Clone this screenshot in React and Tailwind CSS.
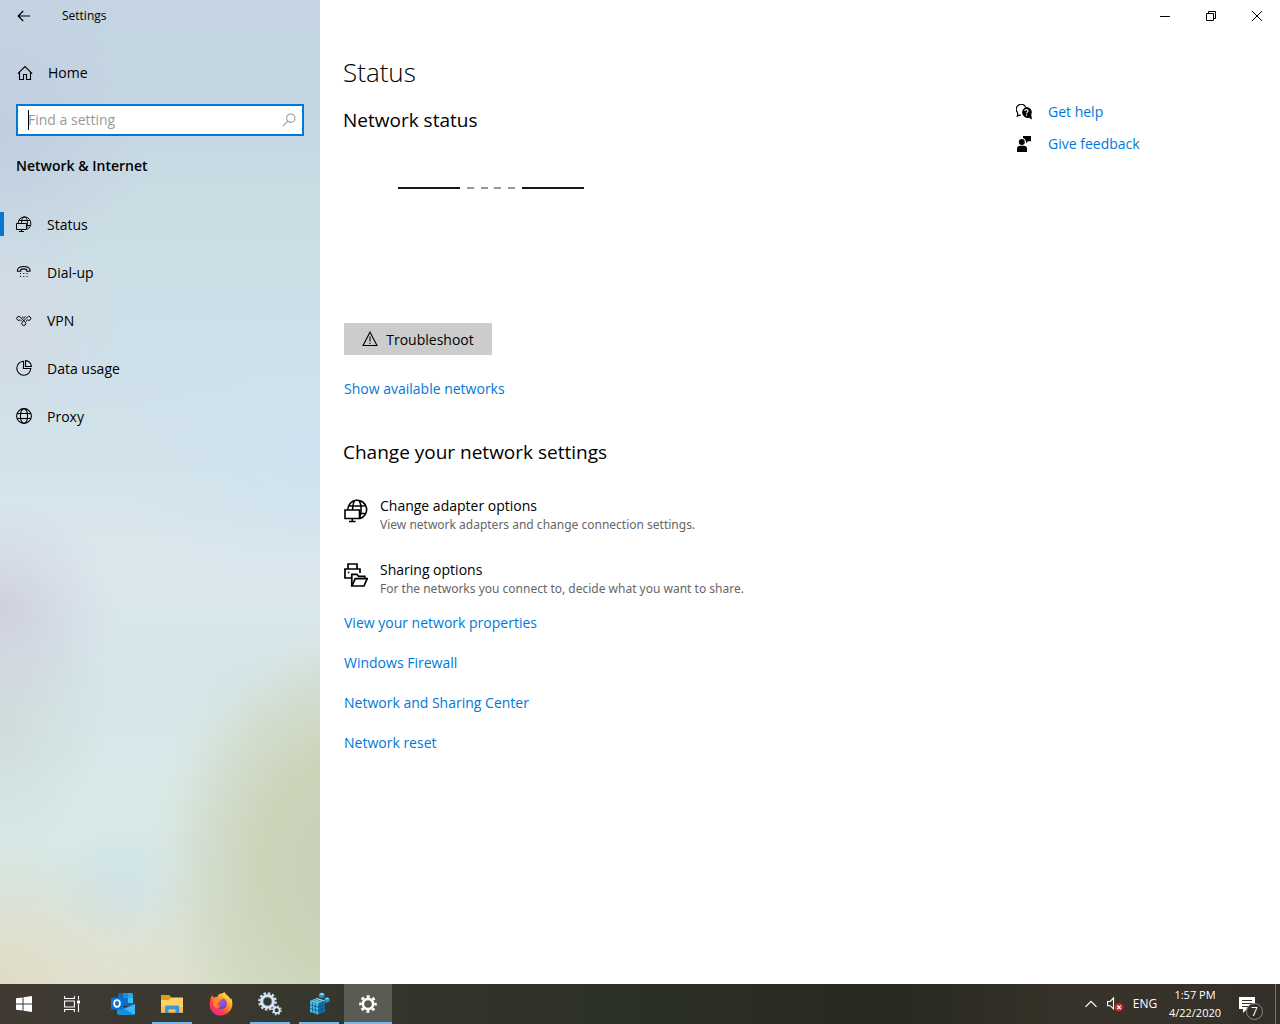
import React from "react";

const line = { fill: "none", stroke: "currentColor" };

function BackIcon() {
  return (
    <svg width="14" height="12" viewBox="0 0 14 12" {...line} strokeWidth="1.2" aria-hidden="true">
      <path d="M13 6H1.2M6.2 1L1.2 6l5 5" />
    </svg>
  );
}

function HomeIcon() {
  return (
    <svg width="16" height="16" viewBox="0 0 16 16" {...line} strokeWidth="1.1" aria-hidden="true">
      <path d="M.8 8.6L8 1.5l7.2 7.1M2.5 7v7.5h4V9.5h3v5h4V7" />
    </svg>
  );
}

function SearchIcon() {
  return (
    <svg width="14" height="14" viewBox="0 0 14 14" {...line} strokeWidth="1.1" aria-hidden="true">
      <circle cx="8.8" cy="5.2" r="4.2" />
      <path d="M5.8 8.2L.8 13.2" />
    </svg>
  );
}

function NetworkIcon() {
  return (
    <svg width="24" height="24" viewBox="0 0 24 24" {...line} strokeWidth="1.6" aria-hidden="true">
      <path d="M3.800 10.800A9.400 9.400 0 1 1 16 19.600M4.800 7h15.800M16 14.500h5.200M8.600 10.800C8.600 5 10.200 1 12.800 1c2.800 0 4.300 4 4.300 9.300 0 3.500-.5 6.500-1.600 8.800" />
      <path d="M1 11h14.500v8.500H1zM8.300 19.500v3M5 22.500h6.600" />
    </svg>
  );
}

function StatusIcon() {
  return (
    <svg width="16" height="16" viewBox="0 0 16 16" {...line} strokeWidth="1" aria-hidden="true">
      <path d="M2.200 7A6.300 6.300 0 1 1 11 13.200M3 4.500h11M11 9.500h3.800M5.500 7.500C5.500 3.500 6.700.7 8.400.7c1.800 0 3 2.800 3 6.300 0 2.200-.3 4-.9 5.500" />
      <path d="M.5 7.500h10v6H.5zM5.500 13.500v2M3 15.500h5" />
    </svg>
  );
}

function DialupIcon() {
  return (
    <svg width="16" height="16" viewBox="0 0 16 16" {...line} strokeWidth="1.1" aria-hidden="true">
      <path d="M1.500 7.300V5.600C3.300 1.500 12.200 1.500 14 5.600v1.700h-3.300V5.600c-1.600-.8-4.200-.8-5.900 0v1.700z" />
      <path d="M4 9.500h8M4 12.500h8" strokeDasharray="1 2.300" />
    </svg>
  );
}

function VpnIcon() {
  return (
    <svg width="16" height="16" viewBox="0 0 16 16" {...line} strokeWidth="1" aria-hidden="true">
      <path d="M4.100 7.900A2 2 0 1 1 4.300 5.100L9.300 10.200A2 2 0 1 1 6.300 10.200L11.300 5.100A2 2 0 1 1 11.500 7.900L9.800 9.500M4.300 7.700l1.600 1.600M6 4.500l1.700 1.600L9.500 4.500" />
    </svg>
  );
}

function DataIcon() {
  return (
    <svg width="16" height="16" viewBox="0 0 16 16" {...line} strokeWidth="1.1" aria-hidden="true">
      <path d="M7.500 1.200A7 7 0 1 0 14.800 8.500H7.500z" />
      <path d="M9.500.6v5.900h5.900A6 6 0 0 0 9.500.6z" />
    </svg>
  );
}

function GlobeIcon() {
  return (
    <svg width="16" height="16" viewBox="0 0 16 16" {...line} strokeWidth="1.1" aria-hidden="true">
      <circle cx="8" cy="8" r="7.400" />
      <ellipse cx="8" cy="8" rx="3.600" ry="7.400" />
      <path d="M1.300 5.500h13.400M1.300 10.500h13.400" />
    </svg>
  );
}

function HelpIcon() {
  return (
    <svg width="16" height="16" viewBox="0 0 16 16" aria-hidden="true">
      <path d="M1.600 8.700A5 5 0 1 1 9.700 3M1.600 8.700v3.600h-.9l2.700-1.200h1.500" fill="none" stroke="#000" strokeWidth="1.200" />
      <path d="M10.500 3a5.300 5.300 0 0 1 4.700 7.700l.8 4.700-3.200-1.600A5.500 5.500 0 1 1 10.500 3z" fill="#000" />
      <path d="M8.800 7c.1-2 3.300-1.900 3.200 0 0 1.100-1.500 1.200-1.500 2.500M10.500 10.600v1.200" fill="none" stroke="#fff" strokeWidth="1.200" />
    </svg>
  );
}

function FeedbackIcon() {
  return (
    <svg width="16" height="16" viewBox="0 0 16 16" aria-hidden="true">
      <circle cx="5.800" cy="6" r="3" />
      <path d="M7 0h8v5.200h-2.800L10 7.300V5.200A4.500 4.500 0 0 0 7 2zM1 16v-3.500C1 10.500 2.500 9.700 4 9.700h3.800c1.800 0 3.200 1 3.200 2.800V16z" />
    </svg>
  );
}

function WarningIcon() {
  return (
    <svg width="16" height="16" viewBox="0 0 16 16" {...line} strokeWidth="1.100" aria-hidden="true">
      <path d="M8 1.200L15 14.500H1zM8 5.500v5M8 11.800v1.200" />
    </svg>
  );
}

function SharingIcon() {
  return (
    <svg width="24" height="24" viewBox="0 0 24 24" {...line} strokeWidth="1.700" aria-hidden="true">
      <path d="M4 6V1h9v5M7.500 15H1V6h15v4M3.800 9.500h1.600M7.800 23V11.300h5l1.800 2h6.200v2.500" />
      <path d="M8 23l3.200-7.300h12L20 23z" />
    </svg>
  );
}

function StartIcon() {
  return (
    <svg width="16" height="16" viewBox="0 0 16 16" fill="#fff" aria-hidden="true">
      <path d="M0 2.300L6.500 1.400V7.500H0zM7.500 1.200L16 0v7.500H7.500zM0 8.500h6.500v6.100L0 13.700zM7.500 8.500H16V16l-8.500-1.200z" />
    </svg>
  );
}

function TaskViewIcon() {
  return (
    <svg width="16" height="16" viewBox="0 0 16 16" fill="none" stroke="#fff" strokeWidth="1.100" aria-hidden="true">
      <path d="M.6 0v2.500h9.800V0M.6 16v-2.500h9.800V16M.6 5h9.800v6H.6zM14.500 0v3.500M14.500 8v8" />
      <path d="M13 4.500h3v3h-3z" fill="#fff" stroke="none" />
    </svg>
  );
}

function OutlookIcon() {
  return (
    <svg width="24" height="22" viewBox="0 0 24 22" aria-hidden="true">
      <path d="M7 1.500Q7 0 8.500 0h12Q22 0 22 1.500V13H7z" fill="#1066b5" />
      <path d="M12 0h5v5h-5z" fill="#1490df" />
      <path d="M17 0h3.500Q22 0 22 1.500V5h-5z" fill="#28a8ea" />
      <path d="M12 5h5v5h-5z" fill="#0f70c4" />
      <path d="M17 5h5v5h-5z" fill="#36c0f5" />
      <path d="M6 11l8 4 10-4v9q0 2-2 2H8q-2 0-2-2z" fill="#1490df" />
      <path d="M24 11v9q0 1-.8 1.500L13.500 16z" fill="#40b8f5" />
      <rect x="0" y="4.500" width="12" height="12" rx="1" fill="#0874d1" />
      <ellipse cx="6" cy="10.500" rx="2.900" ry="3.300" fill="none" stroke="#fff" strokeWidth="1.700" />
    </svg>
  );
}

function ExplorerIcon() {
  return (
    <svg width="22" height="18" viewBox="0 0 22 18" aria-hidden="true">
      <path d="M0 0h8.500l1.500 2.200H22V6H0z" fill="#e39c13" />
      <path d="M0 5h7.500l2-2H22v14.500H0z" fill="#fdd166" />
      <path d="M0 12h22v5.500H0z" fill="#f9c14c" />
      <path d="M4 18v-6q0-1.500 1.500-1.500h11.200q1.500 0 1.500 1.500v6h-3.700v-3.700h-7V18z" fill="#3b96dd" />
    </svg>
  );
}

function FirefoxIcon() {
  return (
    <svg width="24" height="24" viewBox="0 0 24 24" aria-hidden="true">
      <defs>
        <linearGradient id="flame" x1=".85" y1=".1" x2=".2" y2=".95">
          <stop offset="0" stopColor="#fff04a" />
          <stop offset=".35" stopColor="#ff9c22" />
          <stop offset=".7" stopColor="#ff4040" />
          <stop offset="1" stopColor="#e62a91" />
        </linearGradient>
        <radialGradient id="core" cx=".6" cy=".3" r=".8">
          <stop offset="0" stopColor="#a156ed" />
          <stop offset="1" stopColor="#5041ba" />
        </radialGradient>
      </defs>
      <path d="M2 5.200l1.300-2 1.300 2.300C6 4.800 7 4.800 8 5c1.300-2.600 3-3.700 5-3.500 1.400-.8 2-1 2.500-1.500.6 2.500 5 4 6 7.500l.6-1.500c2 4 1.500 9-.3 11.800C17 25.500 6 25.400 2.100 18 0 14.100.7 8.500 2 5.200z" fill="url(#flame)" />
      <path d="M7.300 9.200c1.200-.8 2.600-.5 3.600.2 1-2.200 2.600-3.200 4.500-2.300 2.900 2 3 6.500.7 8.700-2.800 2.300-7.200 1.400-8.600-1.500 2.200.7 3.800-.2 4.900-1.500-2.200-.3-4.200-1-5.100-3.600z" fill="url(#core)" />
      <path d="M4.500 6.500c1.500-1 3-.6 4.500.5-.8 1-.6 1.800 2.200 2.200-.2 1.500-2.500 1.400-2.800 2.600C8 14 9.600 15 11.500 14.500c-2 2.600-6.800 1.700-7.500-2.500z" fill="#ff852e" />
    </svg>
  );
}

function GearsIcon() {
  return (
    <svg width="24" height="24" viewBox="0 0 24 24" fill="none" aria-hidden="true">
      <circle cx="9.500" cy="9.500" r="8.100" stroke="#c7ddf1" strokeWidth="2.400" strokeDasharray="2.500 1.740" />
      <circle cx="9.500" cy="9.500" r="5.900" stroke="#dbe9f5" strokeWidth="2.800" />
      <circle cx="9.500" cy="9.500" r="4.400" stroke="#7ba4cd" strokeWidth=".8" />
      <circle cx="18.700" cy="18.300" r="4.300" stroke="#b8d1e8" strokeWidth="1.600" strokeDasharray="1.700 1.677" />
      <circle cx="18.700" cy="18.300" r="2.900" stroke="#dbe9f5" strokeWidth="1.700" />
    </svg>
  );
}

function RegistryIcon() {
  return (
    <svg width="22" height="24" viewBox="0 0 22 24" aria-hidden="true">
      <path d="M2 9l7-3 8 2.500v11L10 22.500 2 20z" fill="#1178ac" />
      <path d="M2 9l7-3 8 2.500-7 3z" fill="#8bdefb" />
      <path d="M2 9l8 2.500v11L2 20z" fill="#4bbce8" />
      <path d="M2 12.700l8 2.500 7-3M2 16.300l8 2.500 7-3M4.700 9.800v11M7.400 10.700v11M12.300 10.500v11M14.700 9.500v11M4.300 8l8 2.500M6.700 7l8 2.500" fill="none" stroke="#0a527d" strokeWidth=".7" />
      <path d="M11 2l3-1.200L16.500 2v3l-2.700 1.300L11 5z" fill="#1f95cb" />
      <path d="M11 2l3-1.200L16.500 2l-2.700 1.200z" fill="#8bdefb" />
      <path d="M16.500 6.500l2.500-1 2.500 1v3L19 10.700l-2.500-1z" fill="#1f95cb" />
      <path d="M16.500 6.500l2.500-1 2.500 1-2.500 1z" fill="#8bdefb" />
    </svg>
  );
}

function SettingsGearIcon() {
  return (
    <svg width="18" height="18" viewBox="0 0 18 18" fill="none" stroke="#fff" aria-hidden="true">
      <circle cx="9" cy="9" r="5.100" strokeWidth="2.600" />
      <circle cx="9" cy="9" r="7.500" strokeWidth="2.600" strokeDasharray="2.900 2.990" strokeDashoffset="1.450" />
    </svg>
  );
}

const navItems = [
  { label: "Status", icon: <StatusIcon />, active: true },
  { label: "Dial-up", icon: <DialupIcon /> },
  { label: "VPN", icon: <VpnIcon /> },
  { label: "Data usage", icon: <DataIcon /> },
  { label: "Proxy", icon: <GlobeIcon /> },
];

function Sidebar() {
  return (
    <aside className="w-80 shrink-0 bg-[radial-gradient(ellipse_210px_250px_at_110%_88%,#c8cfb7_0%,#ccd4ba_45%,#d0d8c2b0_70%,#d8dfce40_88%,#d8dfce00_100%),radial-gradient(ellipse_120px_110px_at_0%_62%,#cfd1dd_0%,#d1d4e099_45%,#d3d5e200_100%),radial-gradient(ellipse_110px_140px_at_0%_73%,#cfdbdb_0%,#cfdbdb00_100%),radial-gradient(ellipse_120px_100px_at_0%_33%,#d4dae4_0%,#d4dae400_100%),radial-gradient(ellipse_200px_130px_at_100%_46%,#cee3f0_0%,#cee3f000_100%),radial-gradient(ellipse_180px_150px_at_0%_100%,#dedcc5_0%,#dedcc500_100%),radial-gradient(ellipse_70px_60px_at_37%_90%,#cfe3e6_0%,#cfe3e600_100%),radial-gradient(ellipse_200px_130px_at_80%_100%,#d9ddc4_0%,#d9ddc400_100%),radial-gradient(ellipse_150px_150px_at_0%_13%,#c1cee0_0%,#c1cee000_100%),linear-gradient(to_bottom,#c4d4e2_0%,#c5d7e3_12%,#cbdde4_22%,#cee0ea_38%,#d4e3ea_48%,#dce8ee_58%,#d4e6ea_69%,#d8eae9_80%,#d6e8e6_90%,#e8e6da_100%)]">
      <div className="flex h-8 items-center">
        <button type="button" aria-label="Back" className="flex h-8 w-12 items-center justify-center">
          <BackIcon />
        </button>
        <span className="ml-3.5 text-xs leading-8">Settings</span>
      </div>
      <a href="#home" className="mt-[17px] flex h-12 items-center gap-[15px] pl-[17px]">
        <HomeIcon />
        Home
      </a>
      <div className="relative mx-4 mt-[7px]">
        <input
          type="search"
          aria-label="Find a setting"
          placeholder="Find a setting"
          className="block h-8 w-full border-2 border-[#0078d7] bg-white pr-8 pb-0.5 pl-2.5 outline-none placeholder:text-[#999]"
        />
        <span className="absolute top-1.5 left-3 h-5 w-px bg-black" />
        <span className="absolute top-[9px] right-2 text-[#999]">
          <SearchIcon />
        </span>
      </div>
      <h2 className="mt-4 h-7 pl-4 leading-7 font-semibold">Network &amp; Internet</h2>
      <nav className="mt-5">
        {navItems.map((item) => (
          <a key={item.label} href="#section" className="flex h-12 items-center">
            <span className={item.active ? "h-6 w-1 bg-[#0078d7]" : "h-6 w-1"} />
            <span className="mr-[15px] ml-3">{item.icon}</span>
            <span className="pt-px">{item.label}</span>
          </a>
        ))}
      </nav>
    </aside>
  );
}

function BlueLink({ children }) {
  return (
    <a href="#link" className="block w-fit leading-6 text-[#0078d7]">
      {children}
    </a>
  );
}

function Option({ icon, title, text }) {
  return (
    <a href="#option" className="flex gap-3">
      <span className="mt-[3px]">{icon}</span>
      <span>
        <span className="block leading-5">{title}</span>
        <span className="block font-['Noto_Sans',sans-serif] text-xs leading-[18px] text-[#666]">{text}</span>
      </span>
    </a>
  );
}

function Content() {
  return (
    <main className="flex min-w-0 flex-1 flex-col">
      <div className="flex h-8 justify-end">
        <button type="button" aria-label="Minimize" className="flex w-[46px] items-center justify-center">
          <svg width="10" height="10" viewBox="0 0 10 10" {...line}><path d="M0 5.500h10" /></svg>
        </button>
        <button type="button" aria-label="Restore" className="flex w-[46px] items-center justify-center">
          <svg width="10" height="10" viewBox="0 0 10 10" {...line}><path d="M.5 2.500h7v7h-7zM2.500 2.500v-2h7v7h-2" /></svg>
        </button>
        <button type="button" aria-label="Close" className="flex w-[46px] items-center justify-center">
          <svg width="10" height="10" viewBox="0 0 10 10" {...line}><path d="M0 0l10 10M10 0L0 10" /></svg>
        </button>
      </div>
      <div className="flex flex-1 pl-6">
        <div className="flex-1">
          <h1 className="mt-5 -ml-px text-[26px] leading-10 font-light">Status</h1>
          <h2 className="mt-3.5 -ml-px text-[19px] leading-7">Network status</h2>
          <div className="mt-[53px] ml-[54px] flex h-0.5 w-[186px] justify-between">
            <span className="w-[62px] bg-[#15171a]" />
            <span className="w-[7px] bg-[#999]" />
            <span className="w-[7px] bg-[#999]" />
            <span className="w-[7px] bg-[#999]" />
            <span className="w-[7px] bg-[#999]" />
            <span className="w-[62px] bg-[#15171a]" />
          </div>
          <button type="button" className="mt-[134px] flex h-8 w-[148px] items-center justify-center gap-2 bg-[#ccc]">
            <WarningIcon />
            <span className="pt-px">Troubleshoot</span>
          </button>
          <div className="mt-[22px]">
            <BlueLink>Show available networks</BlueLink>
          </div>
          <h2 className="mt-[37px] -ml-px text-[19px] leading-7">Change your network settings</h2>
          <div className="mt-[30px] flex flex-col gap-[26px]">
            <Option icon={<NetworkIcon />} title="Change adapter options" text="View network adapters and change connection settings." />
            <Option icon={<SharingIcon />} title="Sharing options" text="For the networks you connect to, decide what you want to share." />
          </div>
          <div className="mt-[13px] flex flex-col gap-4">
            <BlueLink>View your network properties</BlueLink>
            <BlueLink>Windows Firewall</BlueLink>
            <BlueLink>Network and Sharing Center</BlueLink>
            <BlueLink>Network reset</BlueLink>
          </div>
        </div>
        <div className="flex w-66 shrink-0 flex-col gap-2 pt-[68px]">
          <div className="flex items-center gap-4">
            <HelpIcon />
            <BlueLink>Get help</BlueLink>
          </div>
          <div className="flex items-center gap-4">
            <FeedbackIcon />
            <BlueLink>Give feedback</BlueLink>
          </div>
        </div>
      </div>
    </main>
  );
}

const apps = [
  { label: "Outlook", icon: <OutlookIcon /> },
  { label: "File Explorer", icon: <ExplorerIcon />, open: true },
  { label: "Firefox", icon: <FirefoxIcon /> },
  { label: "Services", icon: <GearsIcon />, open: true },
  { label: "Registry Editor", icon: <RegistryIcon />, open: true },
];

function Taskbar() {
  return (
    <footer className="flex h-10 shrink-0 bg-[linear-gradient(to_right,#403a33_0%,#3a382f_18%,#34352b_30%,#2b3026_50%,#28291f_70%,#38332a_85%,#342f28_100%)] text-white">
      <button type="button" aria-label="Start" className="flex w-12 items-center justify-center">
        <StartIcon />
      </button>
      <button type="button" aria-label="Task View" className="flex w-12 items-center justify-center">
        <TaskViewIcon />
      </button>
      <div className="ml-[3px] flex gap-px">
        {apps.map((app) => (
          <button key={app.label} type="button" aria-label={app.label} className="flex w-12 flex-col items-center">
            <span className="flex flex-1 items-center">{app.icon}</span>
            <span className={app.open ? "-mt-0.5 h-0.5 w-10 bg-[#76b9ed]" : "-mt-0.5 h-0.5 w-10"} />
          </button>
        ))}
        <button type="button" aria-label="Settings" className="flex w-12 flex-col items-center bg-[#5a5c54]">
          <span className="flex flex-1 items-center"><SettingsGearIcon /></span>
          <span className="-mt-0.5 h-0.5 w-12 bg-[#76b9ed]" />
        </button>
      </div>
      <div className="ml-auto flex items-center text-xs">
        <button type="button" aria-label="Show hidden icons" className="flex h-10 w-6 items-center justify-center">
          <svg width="12" height="8" viewBox="0 0 12 8" {...line} strokeWidth="1.200"><path d="M.5 6.800L6 1.300l5.500 5.500" /></svg>
        </button>
        <button type="button" aria-label="Volume" className="ml-1 flex h-10 w-5 items-center">
          <svg width="17" height="16" viewBox="0 0 17 16" {...line} strokeWidth="1.100">
            <path d="M.6 5.500h2.600L6.500 2v11L3.200 9.700H.6z" />
            <circle cx="12" cy="11.300" r="4.300" fill="#d9232e" stroke="none" />
            <path d="M10.300 9.600l3.400 3.400M13.700 9.600L10.300 13" strokeWidth="1.300" />
          </svg>
        </button>
        <button type="button" className="h-10 w-9">ENG</button>
        <button type="button" className="h-10 w-16 text-center text-[11px] leading-[18px] whitespace-nowrap">
          1:57 PM
          <br />
          4/22/2020
        </button>
        <button type="button" aria-label="7 notifications" className="relative flex h-10 w-12 items-center pl-3">
          <svg width="17" height="17" viewBox="0 0 17 17" aria-hidden="true">
            <path d="M0 1h16v12H8l-4 4v-4H0z" fill="#fff" />
            <path d="M3 4.500h10M3 7.500h10M3 10.500h7" stroke="#342f28" />
          </svg>
          <span className="absolute top-[19px] left-[19px] flex size-[17px] items-center justify-center rounded-full border border-[#8a8784] bg-[#302d29] text-xs">7</span>
        </button>
        <span className="h-10 w-[5px] border-l border-[#77736d]" />
      </div>
    </footer>
  );
}

export default function App() {
  return (
    <div className="flex min-h-screen flex-col bg-white font-['Open_Sans',sans-serif] text-sm text-black">
      <div className="flex flex-1">
        <Sidebar />
        <Content />
      </div>
      <Taskbar />
    </div>
  );
}
